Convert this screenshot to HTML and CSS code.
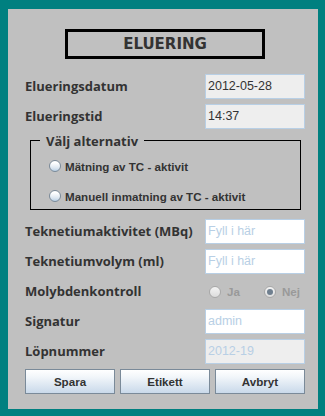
FILE: index.html
```html
<!DOCTYPE html>
<html lang="sv">
<head>
<meta charset="utf-8">
<title>Eluering</title>
<link rel="stylesheet" href="styles.css">
</head>
<body>
<div class="panel">
  <div class="title">ELUERING</div>

  <div class="row first">
    <span class="label">Elueringsdatum</span>
    <div class="field disabled dark">2012-05-28</div>
  </div>
  <div class="row">
    <span class="label">Elueringstid</span>
    <div class="field disabled dark">14:37</div>
  </div>

  <div class="group">
    <span class="legend">Välj alternativ</span>
    <div class="radio-row"><span class="radio"></span><span class="rtext">Mätning av TC - aktivit</span></div>
    <div class="radio-row"><span class="radio"></span><span class="rtext">Manuell inmatning av TC - aktivit</span></div>
  </div>

  <div class="row after-group">
    <span class="label">Teknetiumaktivitet (MBq)</span>
    <div class="field light">Fyll i här</div>
  </div>
  <div class="row">
    <span class="label">Teknetiumvolym (ml)</span>
    <div class="field light">Fyll i här</div>
  </div>
  <div class="row">
    <span class="label">Molybdenkontroll</span>
    <div class="choices">
      <div class="choice ja"><span class="radio off"></span><span class="ctext">Ja</span></div>
      <div class="choice"><span class="radio off sel"></span><span class="ctext">Nej</span></div>
    </div>
  </div>
  <div class="row">
    <span class="label">Signatur</span>
    <div class="field light">admin</div>
  </div>
  <div class="row">
    <span class="label">Löpnummer</span>
    <div class="field disabled light">2012-19</div>
  </div>

  <div class="buttons">
    <button class="btn">Spara</button>
    <button class="btn">Etikett</button>
    <button class="btn">Avbryt</button>
  </div>
</div>
</body>
</html>
```

FILE: styles.css
```css
html, body {
  margin: 0;
  padding: 0;
  background: #008080;
}

.panel {
  margin: 9px 0 0 8px;
  width: 310px;
  height: 400px;
  box-sizing: border-box;
  background: #c0c0c0;
  padding: 20px 13px 0 17px;
  display: flex;
  flex-direction: column;
}

.title {
  align-self: center;
  width: 200px;
  height: 30px;
  box-sizing: border-box;
  border: 3px solid #000;
  display: flex;
  align-items: center;
  justify-content: center;
  font-family: "DejaVu Sans", sans-serif;
  font-weight: bold;
  font-size: 15px;
  color: #333;
}

.row {
  height: 25px;
  margin-top: 5px;
  display: flex;
  align-items: center;
  justify-content: space-between;
}

.row.first {
  margin-top: 15px;
}

.row.after-group {
  margin-top: 9px;
}

.label {
  font-family: "Open Sans", sans-serif;
  font-weight: 700;
  font-size: 13px;
  line-height: 18px;
  color: #333;
  padding-bottom: 2px;
}

.field {
  width: 100px;
  height: 25px;
  box-sizing: border-box;
  border: 1px solid #b8cfe5;
  background: #fff;
  padding: 0 2px;
  display: flex;
  align-items: center;
  font-family: "Liberation Sans", Arial, sans-serif;
  font-size: 12.5px;
  padding-bottom: 1px;
}

.field.disabled {
  background: #eeeeee;
}

.field.dark {
  color: #333;
}

.field.light {
  color: #b8cfe5;
}

.group {
  position: relative;
  margin: 11px 4px 0 5px;
  height: 70px;
  box-sizing: border-box;
  border: 1px solid #000;
  padding: 15px 0 0 18px;
  display: flex;
  flex-direction: column;
  gap: 10px;
}

.legend {
  position: absolute;
  left: 9px;
  top: -9px;
  padding: 0 6px;
  background: #c0c0c0;
  font-family: "Open Sans", sans-serif;
  font-weight: 700;
  font-size: 13px;
  line-height: 18px;
  color: #333;
}

.radio-row {
  height: 20px;
  display: flex;
  align-items: center;
}

.radio {
  width: 12px;
  height: 12px;
  box-sizing: border-box;
  border-radius: 50%;
  border: 1px solid #7a8a99;
  background: linear-gradient(#ffffff 20%, #dce6f0 70%, #b8cfe5);
  flex: none;
}

.radio.off {
  border-color: #a8a8a8;
  background: linear-gradient(#f4f4f4, #dcdcdc);
}

.radio.sel {
  position: relative;
}

.radio.sel::after {
  content: "";
  position: absolute;
  left: 2px;
  top: 2px;
  width: 6px;
  height: 6px;
  border-radius: 50%;
  background: #6f7f8f;
}

.rtext {
  margin-left: 4px;
  font-family: "Liberation Sans", Arial, sans-serif;
  font-weight: bold;
  font-size: 11.6px;
  color: #333;
}

.choices {
  width: 100px;
  box-sizing: border-box;
  padding-left: 4px;
  display: flex;
  align-items: center;
}

.choice {
  display: flex;
  align-items: center;
}

.choice.ja {
  width: 55px;
}

.ctext {
  margin-left: 6px;
  font-family: "Liberation Sans", Arial, sans-serif;
  font-weight: bold;
  font-size: 11.6px;
  color: #999;
}

.buttons {
  margin-top: 5px;
  display: flex;
  gap: 5px;
}

.btn {
  width: 90px;
  height: 25px;
  margin: 0;
  padding: 0;
  box-sizing: border-box;
  border: 1px solid #7a8a99;
  border-radius: 0;
  background: linear-gradient(#ffffff 0%, #f2f6fa 30%, #c9d9ea 100%);
  font-family: "Liberation Sans", Arial, sans-serif;
  font-weight: bold;
  font-size: 11.6px;
  color: #333;
}
```
